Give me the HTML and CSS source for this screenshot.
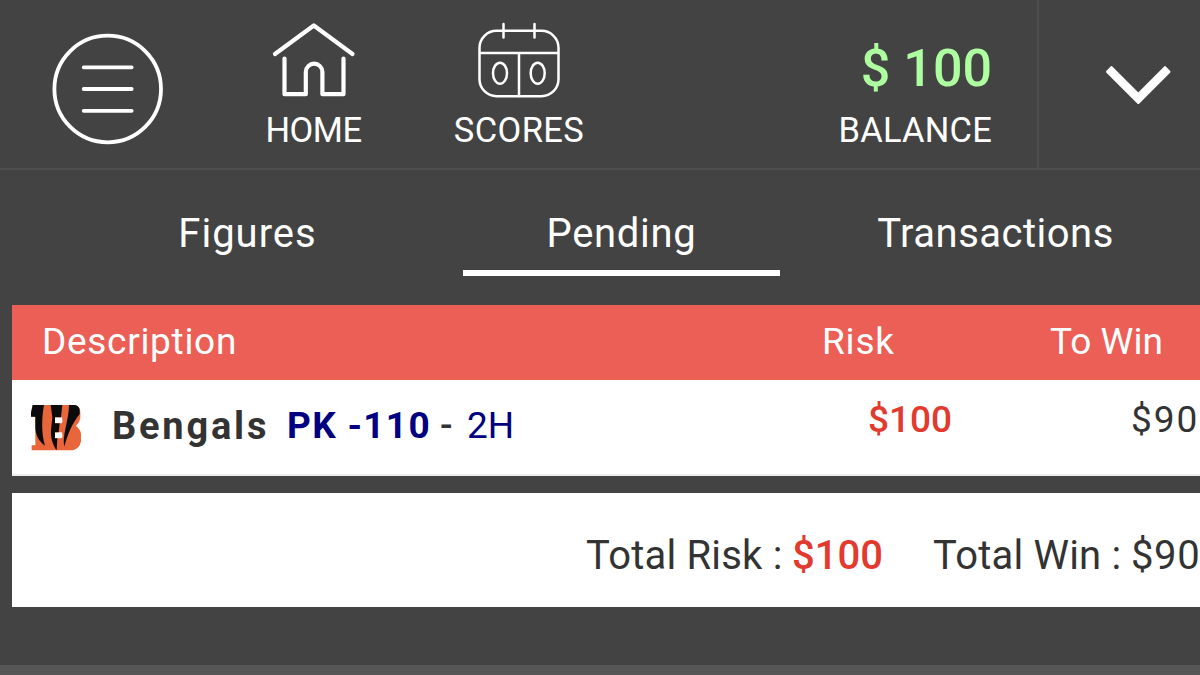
FILE: index.html
```html
<!DOCTYPE html>
<html lang="en">
<head>
  <meta charset="UTF-8">
  <title>Pending</title>
  <link rel="stylesheet" href="styles.css">
</head>
<body>
  <header class="topbar">
    <button class="menu">
      <svg width="112" height="112" viewBox="0 0 112 112">
        <circle cx="55.7" cy="56" r="53.3" stroke-width="3.8"/>
        <path d="M31.7 34.3h48M31.7 56h48M31.7 77.8h48" stroke-width="3.8"/>
      </svg>
    </button>
    <a class="nav-item home">
      <svg width="86" height="78" viewBox="0 0 86 78">
        <path d="M4 34 42.8 5.5 81.5 34M13.5 38.5v35.7h21.3V52a8.3 8.3 0 0 1 16.6 0v22.2H72.5V38.5" stroke-width="4.2"/>
      </svg>
      <span>HOME</span>
    </a>
    <a class="nav-item scores">
      <svg width="86" height="78" viewBox="0 0 86 78">
        <rect x="3.5" y="10.8" width="79" height="65.4" rx="17" stroke-width="2.5"/>
        <path d="M27.5 4v13.5M58.5 4v13.5M4 33h78M43 33v43" stroke-width="2.5"/>
        <ellipse cx="24" cy="53.2" rx="7" ry="10.5" stroke-width="2.5"/>
        <ellipse cx="61.7" cy="53.2" rx="7" ry="10.5" stroke-width="2.5"/>
      </svg>
      <span>SCORES</span>
    </a>
    <div class="balance">
      <span class="amount">$ 100</span>
      <span class="label">BALANCE</span>
    </div>
    <button class="toggle">
      <svg width="68" height="42" viewBox="0 0 68 42">
        <path class="chevron" d="M3.5 7.7 7.5 3.7 34.3 30.5 61 3.7 65 7.7 34.3 38.4Z"/>
      </svg>
    </button>
  </header>

  <nav class="tabs">
    <a class="tab figures"><span>Figures</span></a>
    <a class="tab pending active"><span>Pending</span></a>
    <a class="tab transactions"><span>Transactions</span></a>
  </nav>

  <main class="bets">
    <div class="row head">
      <div class="desc">Description</div>
      <div class="risk">Risk</div>
      <div class="win">To Win</div>
    </div>
    <div class="row bet">
      <div class="desc">
        <svg class="logo" width="52" height="48" viewBox="0 0 156 144">
          <path fill="#e8663a" fill-rule="evenodd" d="M5 3H132Q148 8 148 24V42Q146 56 135 66Q148 75 150 90V112Q146 134 126 139H2V124H13V38H0V26ZM72 40V58H90Q94 58 94 54V44Q94 40 90 40ZM72 85V103H90Q94 103 94 99V89Q94 85 90 85Z"/>
          <path fill="#0b0b0b" d="M5 3H39C31 45 32 92 42 125C24 112 13 92 13 68V38H0V26ZM59 3H94L90 40H72V58H86L83 85H72V103H79L77 139C65 122 58 100 60 78L64 40ZM114 3H132Q146 6 146 20V30C124 58 110 90 100 128C92 96 114 48 114 3Z"/>
        </svg>
        <b class="team">Bengals</b>
        <b class="line">PK -110</b>
        <span class="dash">-</span>
        <span class="period">2H</span>
      </div>
      <div class="risk">$100</div>
      <div class="win">$90</div>
    </div>
    <div class="totals">
      <span class="total-risk">Total Risk :</span>
      <span class="red">$100</span>
      <span class="total-win">Total Win :</span>
      <span class="win-amount">$90</span>
    </div>
  </main>

  <footer class="bottom"></footer>
</body>
</html>
```
FILE: styles.css
```css
* {
  box-sizing: border-box;
}
body {
  margin: 0;
  height: 675px;
  overflow: hidden;
  display: flex;
  flex-direction: column;
  background-color: #434343;
  color: #fff;
  font-family: Roboto, "Liberation Sans", sans-serif;
  white-space: nowrap;
}
button {
  background: none;
  border: 0;
  padding: 0;
}
svg {
  display: block;
  fill: none;
  stroke: #fff;
  stroke-linecap: round;
  stroke-linejoin: round;
}

/* top bar */
.topbar {
  display: flex;
  flex: none;
  height: 170px;
  border-bottom: 2px solid #4e4e4e;
}
.menu {
  width: 112px;
  margin-left: 52px;
  padding-top: 33px;
  align-self: flex-start;
}
.nav-item {
  display: flex;
  flex-direction: column;
  align-items: center;
  padding-top: 20px;
  font-size: 34.5px;
  line-height: 40px;
}
.nav-item span {
  margin-top: 12px;
}
.home {
  width: 120px;
  margin-left: 90px;
}
.home svg {
  margin-left: -1px;
}
.home span {
  margin-left: -1px;
  letter-spacing: -0.5px;
}
.scores {
  width: 160px;
  margin-left: 65px;
}
.scores span {
  letter-spacing: 0.4px;
}
.balance {
  display: flex;
  flex-direction: column;
  align-items: flex-end;
  margin-left: auto;
  width: 200px;
  padding-right: 45px;
  padding-top: 39px;
}
.amount {
  color: #adff9f;
  font-size: 52px;
  font-weight: 500;
  line-height: 60px;
}
.label {
  margin-top: 11px;
  font-size: 34.5px;
  letter-spacing: 0.2px;
  line-height: 40px;
}
.toggle {
  width: 163px;
  border-left: 2px solid #4e4e4e;
  padding: 64px 0 0 65px;
  display: flex;
}
.chevron {
  fill: #fff;
  stroke-width: 3;
}

/* tabs */
.tabs {
  display: flex;
  flex: none;
  height: 135px;
  padding-left: 89px;
  gap: 57px;
  font-size: 40px;
  letter-spacing: 0.7px;
}
.tab {
  width: 317px;
  height: 106px;
  line-height: 127px;
  text-align: center;
}
.figures {
  letter-spacing: 1px;
}
.transactions {
  letter-spacing: 0.5px;
}
.active {
  border-bottom: 6px solid #fff;
}

/* bet list */
.bets {
  flex: none;
  margin-left: 12px;
  color: #333;
}
.row {
  display: grid;
  grid-template-columns: 811px 228px 149px;
}
.head {
  height: 75px;
  background-color: #eb5f57;
  color: #fff;
  font-size: 37px;
  line-height: 73px;
}
.head .desc {
  padding-left: 30px;
  letter-spacing: 0.7px;
}
.head .risk {
  margin-left: -1px;
  letter-spacing: 0.8px;
}
.head .win {
  margin-left: -1px;
}
.bet {
  height: 96px;
  background-color: #fff;
  border-bottom: 2px solid #eee;
  font-size: 37px;
}
.bet .desc {
  display: flex;
  align-items: center;
  height: 91px;
  padding-left: 19px;
}
.logo {
  margin-top: 4px;
  stroke: none;
}
.team {
  width: 175px;
  margin-left: 29px;
  font-size: 38px;
  letter-spacing: 2.8px;
}
.line {
  width: 153px;
  color: #000080;
  letter-spacing: 1.3px;
}
.dash {
  width: 27px;
  font-weight: 500;
}
.period {
  color: #000080;
}
.bet .risk, .bet .win {
  line-height: 79px;
}
.bet .risk {
  padding-left: 45px;
  font-weight: 500;
}
.bet .win {
  padding-left: 80px;
  letter-spacing: 2px;
}
.bet .risk, .red {
  color: #e23a2e;
}
.totals {
  display: flex;
  height: 114px;
  margin-top: 17px;
  padding-left: 574px;
  background-color: #fff;
  font-size: 40px;
  line-height: 126px;
  overflow: hidden;
}
.totals span {
  flex: none;
}
.total-risk {
  width: 206px;
  letter-spacing: 0.2px;
}
.red {
  width: 141px;
  font-weight: 500;
}
.total-win {
  width: 198px;
  letter-spacing: 0.2px;
}
.win-amount {
  letter-spacing: 0.6px;
}
.bottom {
  height: 10px;
  margin-top: auto;
  background-color: #565656;
}
```
